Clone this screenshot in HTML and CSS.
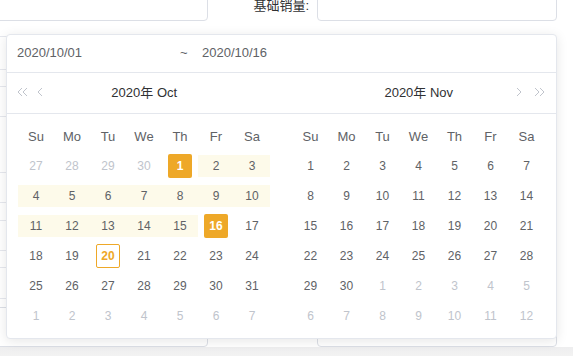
FILE: index.html
```
<!DOCTYPE html>
<html lang="zh-CN">
<head>
    <meta charset="UTF-8">
    <title>日期范围</title>
    <link rel="stylesheet" href="styles.css">
</head>
<body>
    <div id="page">
        <div class="form-row top">
            <div class="input first"></div>
            <label>基础销量:</label>
            <div class="input second"></div>
        </div>
        <div class="side-lines">
            <i style="height:37px"></i><i style="height:33px"></i><i style="height:17px"></i><i style="height:30px"></i>
            <i style="height:56px"></i><i style="height:30px"></i><i style="height:18px"></i><i style="height:30px"></i>
            <i style="height:17px"></i><i style="height:31px"></i><i style="height:18px"></i>
        </div>
        <div class="form-row bottom">
            <div class="input first"></div>
            <label></label>
            <div class="input second"></div>
        </div>
        <div class="shade"></div>
    </div>

    <div id="picker">
        <div class="range-input">
            <span class="from">2020/10/01</span>
            <span class="sep">~</span>
            <span class="to">2020/10/16</span>
        </div>
        <div class="nav">
            <div class="nav-half">
                <span class="arrows">
                    <svg width="11" height="10" viewBox="0 0 11 10"><path d="M5 1 L1 5 L5 9 M10 1 L6 5 L10 9" fill="none" stroke="#c0c4cc" stroke-width="1"/></svg>
                    <svg width="6" height="10" viewBox="0 0 6 10"><path d="M5 1 L1 5 L5 9" fill="none" stroke="#c0c4cc" stroke-width="1"/></svg>
                </span>
                <span class="title">2020年 Oct</span>
            </div>
            <div class="nav-half">
                <span class="title">2020年 Nov</span>
                <span class="arrows right">
                    <svg width="6" height="10" viewBox="0 0 6 10"><path d="M1 1 L5 5 L1 9" fill="none" stroke="#c0c4cc" stroke-width="1"/></svg>
                    <svg width="11" height="10" viewBox="0 0 11 10"><path d="M1 1 L5 5 L1 9 M6 1 L10 5 L6 9" fill="none" stroke="#c0c4cc" stroke-width="1"/></svg>
                </span>
            </div>
        </div>
        <div class="panels">
            <div class="panel">
                <div class="week"><span>Su</span><span>Mo</span><span>Tu</span><span>We</span><span>Th</span><span>Fr</span><span>Sa</span></div>
                <div class="days">
                    <div class="cell other"><span>27</span></div>
                    <div class="cell other"><span>28</span></div>
                    <div class="cell other"><span>29</span></div>
                    <div class="cell other"><span>30</span></div>
                    <div class="cell start"><span>1</span></div>
                    <div class="cell in-range"><span>2</span></div>
                    <div class="cell in-range"><span>3</span></div>

                    <div class="cell in-range"><span>4</span></div>
                    <div class="cell in-range"><span>5</span></div>
                    <div class="cell in-range"><span>6</span></div>
                    <div class="cell in-range"><span>7</span></div>
                    <div class="cell in-range"><span>8</span></div>
                    <div class="cell in-range"><span>9</span></div>
                    <div class="cell in-range"><span>10</span></div>

                    <div class="cell in-range"><span>11</span></div>
                    <div class="cell in-range"><span>12</span></div>
                    <div class="cell in-range"><span>13</span></div>
                    <div class="cell in-range"><span>14</span></div>
                    <div class="cell in-range"><span>15</span></div>
                    <div class="cell end"><span>16</span></div>
                    <div class="cell"><span>17</span></div>

                    <div class="cell"><span>18</span></div>
                    <div class="cell"><span>19</span></div>
                    <div class="cell today"><span>20</span></div>
                    <div class="cell"><span>21</span></div>
                    <div class="cell"><span>22</span></div>
                    <div class="cell"><span>23</span></div>
                    <div class="cell"><span>24</span></div>

                    <div class="cell"><span>25</span></div>
                    <div class="cell"><span>26</span></div>
                    <div class="cell"><span>27</span></div>
                    <div class="cell"><span>28</span></div>
                    <div class="cell"><span>29</span></div>
                    <div class="cell"><span>30</span></div>
                    <div class="cell"><span>31</span></div>

                    <div class="cell other"><span>1</span></div>
                    <div class="cell other"><span>2</span></div>
                    <div class="cell other"><span>3</span></div>
                    <div class="cell other"><span>4</span></div>
                    <div class="cell other"><span>5</span></div>
                    <div class="cell other"><span>6</span></div>
                    <div class="cell other"><span>7</span></div>
                </div>
            </div>
            <div class="panel">
                <div class="week"><span>Su</span><span>Mo</span><span>Tu</span><span>We</span><span>Th</span><span>Fr</span><span>Sa</span></div>
                <div class="days">
                    <div class="cell"><span>1</span></div>
                    <div class="cell"><span>2</span></div>
                    <div class="cell"><span>3</span></div>
                    <div class="cell"><span>4</span></div>
                    <div class="cell"><span>5</span></div>
                    <div class="cell"><span>6</span></div>
                    <div class="cell"><span>7</span></div>

                    <div class="cell"><span>8</span></div>
                    <div class="cell"><span>9</span></div>
                    <div class="cell"><span>10</span></div>
                    <div class="cell"><span>11</span></div>
                    <div class="cell"><span>12</span></div>
                    <div class="cell"><span>13</span></div>
                    <div class="cell"><span>14</span></div>

                    <div class="cell"><span>15</span></div>
                    <div class="cell"><span>16</span></div>
                    <div class="cell"><span>17</span></div>
                    <div class="cell"><span>18</span></div>
                    <div class="cell"><span>19</span></div>
                    <div class="cell"><span>20</span></div>
                    <div class="cell"><span>21</span></div>

                    <div class="cell"><span>22</span></div>
                    <div class="cell"><span>23</span></div>
                    <div class="cell"><span>24</span></div>
                    <div class="cell"><span>25</span></div>
                    <div class="cell"><span>26</span></div>
                    <div class="cell"><span>27</span></div>
                    <div class="cell"><span>28</span></div>

                    <div class="cell"><span>29</span></div>
                    <div class="cell"><span>30</span></div>
                    <div class="cell other"><span>1</span></div>
                    <div class="cell other"><span>2</span></div>
                    <div class="cell other"><span>3</span></div>
                    <div class="cell other"><span>4</span></div>
                    <div class="cell other"><span>5</span></div>

                    <div class="cell other"><span>6</span></div>
                    <div class="cell other"><span>7</span></div>
                    <div class="cell other"><span>8</span></div>
                    <div class="cell other"><span>9</span></div>
                    <div class="cell other"><span>10</span></div>
                    <div class="cell other"><span>11</span></div>
                    <div class="cell other"><span>12</span></div>
                </div>
            </div>
        </div>
    </div>
</body>
</html>
```

FILE: styles.css
```
*{margin: 0;padding: 0;box-sizing: border-box;}
html,body{width: 573px;height: 356px;overflow: hidden;}
body{background: #fff;font-family: "Liberation Sans", "Noto Sans CJK SC", sans-serif;color: #606266;position: relative;}

#page{height: 356px;position: relative;}
.form-row{display: flex;height: 40px;}
.form-row.top{margin-top: -19px;}
.form-row .input{height: 40px;border: 1px solid #dcdfe6;border-radius: 4px;background: #fff;}
.form-row .first{width: 218px;margin-left: -10px;}
.form-row .second{width: 240px;}
.form-row label{width: 109px;padding-right: 8px;text-align: right;font-size: 13px;line-height: 13px;padding-top: 18px;color: #303133;}
.form-row.bottom{margin-top: 0;}
.side-lines{width: 208px;height: 307px;margin-top: -21px;display: flex;flex-direction: column;}
.side-lines i{display: block;border-bottom: 1px solid #e6e8ee;flex: none;}
.shade{height: 9px;background: linear-gradient(#eeeeef, #f2f2f2);}

#picker{position: absolute;left: 6px;top: 34px;width: 551px;height: 305px;background: #fff;border: 1px solid #e4e7ed;border-radius: 4px;box-shadow: 0 2px 12px rgba(0,0,0,.1);}
.range-input{height: 38px;border-bottom: 1px solid #e4e7ed;display: flex;align-items: center;font-size: 13px;padding-left: 10px;padding-bottom: 3px;}
.range-input .from{width: 163px;}
.range-input .sep{width: 22px;}

.nav{height: 41px;border-bottom: 1px solid #e4e7ed;display: flex;}
.nav-half{flex: 1;position: relative;display: flex;align-items: center;justify-content: center;padding-bottom: 4px;}
.nav .title{font-size: 13px;color: #303133;}
.nav .arrows{position: absolute;left: 10px;top: 14px;display: flex;gap: 9px;}
.nav .arrows.right{left: auto;right: 11px;gap: 12px;}
.nav .arrows svg{display: block;}

.panels{display: flex;}
.panel{flex: 1;padding: 7px 11px 0;}
.week{display: grid;grid-template-columns: repeat(7, 36px);height: 30px;font-size: 13px;}
.week span{display: flex;align-items: center;justify-content: center;}
.days{display: grid;grid-template-columns: repeat(7, 36px);grid-auto-rows: 30px;font-size: 12px;}
.cell{display: flex;align-items: center;justify-content: center;padding: 4px 0;}
.cell span{width: 24px;height: 24px;line-height: 24px;text-align: center;border-radius: 2px;flex: none;}
.cell.other{color: #c0c4cc;}
.cell.in-range{background: #fdfaea;background-clip: content-box;}
.cell.start span,.cell.end span{background: #eea828;color: #fff;font-weight: bold;}
.cell.today span{border: 1px solid #eea828;color: #eea828;font-weight: bold;line-height: 22px;}
```
